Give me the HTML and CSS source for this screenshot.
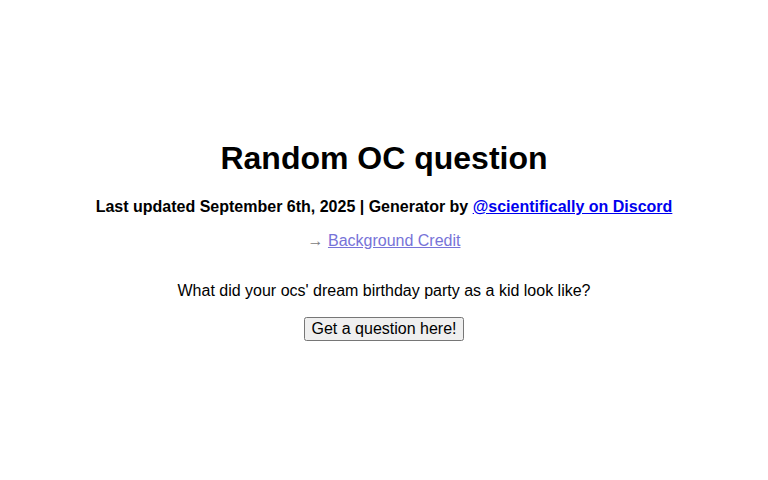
FILE: index.html
```html
<!DOCTYPE html>
<html>
<head>
<meta charset="utf-8">
<link rel="stylesheet" href="styles.css">
</head>
<body>
<main class="page">
  <h1 class="title">Random OC question</h1>
  <p class="meta">Last updated September 6th, 2025 | Generator by <a href="#">@scientifically on Discord</a></p>
  <p class="credit">→ <a href="#">Background Credit</a></p>
  <p class="question">What did your ocs' dream birthday party as a kid look like?</p>
  <button class="btn">Get a question here!</button>
</main>
</body>
</html>
```
FILE: styles.css
```css
html, body {
  margin: 0;
  padding: 0;
  background: #ffffff;
}
body {
  font-family: "Liberation Sans", Arial, sans-serif;
  font-size: 16px;
  color: #000;
}
.page {
  display: flex;
  flex-direction: column;
  align-items: center;
  text-align: center;
  padding-top: 119px;
}
.title {
  font-size: 32px;
  font-weight: bold;
  margin: 21px 0 0;
}
.meta {
  font-weight: bold;
  margin: 21px 0 0;
}
.meta a {
  color: #0000ee;
}
.credit {
  color: #808080;
  margin: 16px 0 0;
}
.credit a {
  color: #7773d8;
}
.question {
  margin: 32px 0 0;
}
.btn {
  margin-top: 17px;
  font-family: "Liberation Sans", Arial, sans-serif;
  font-size: 16px;
}
```
